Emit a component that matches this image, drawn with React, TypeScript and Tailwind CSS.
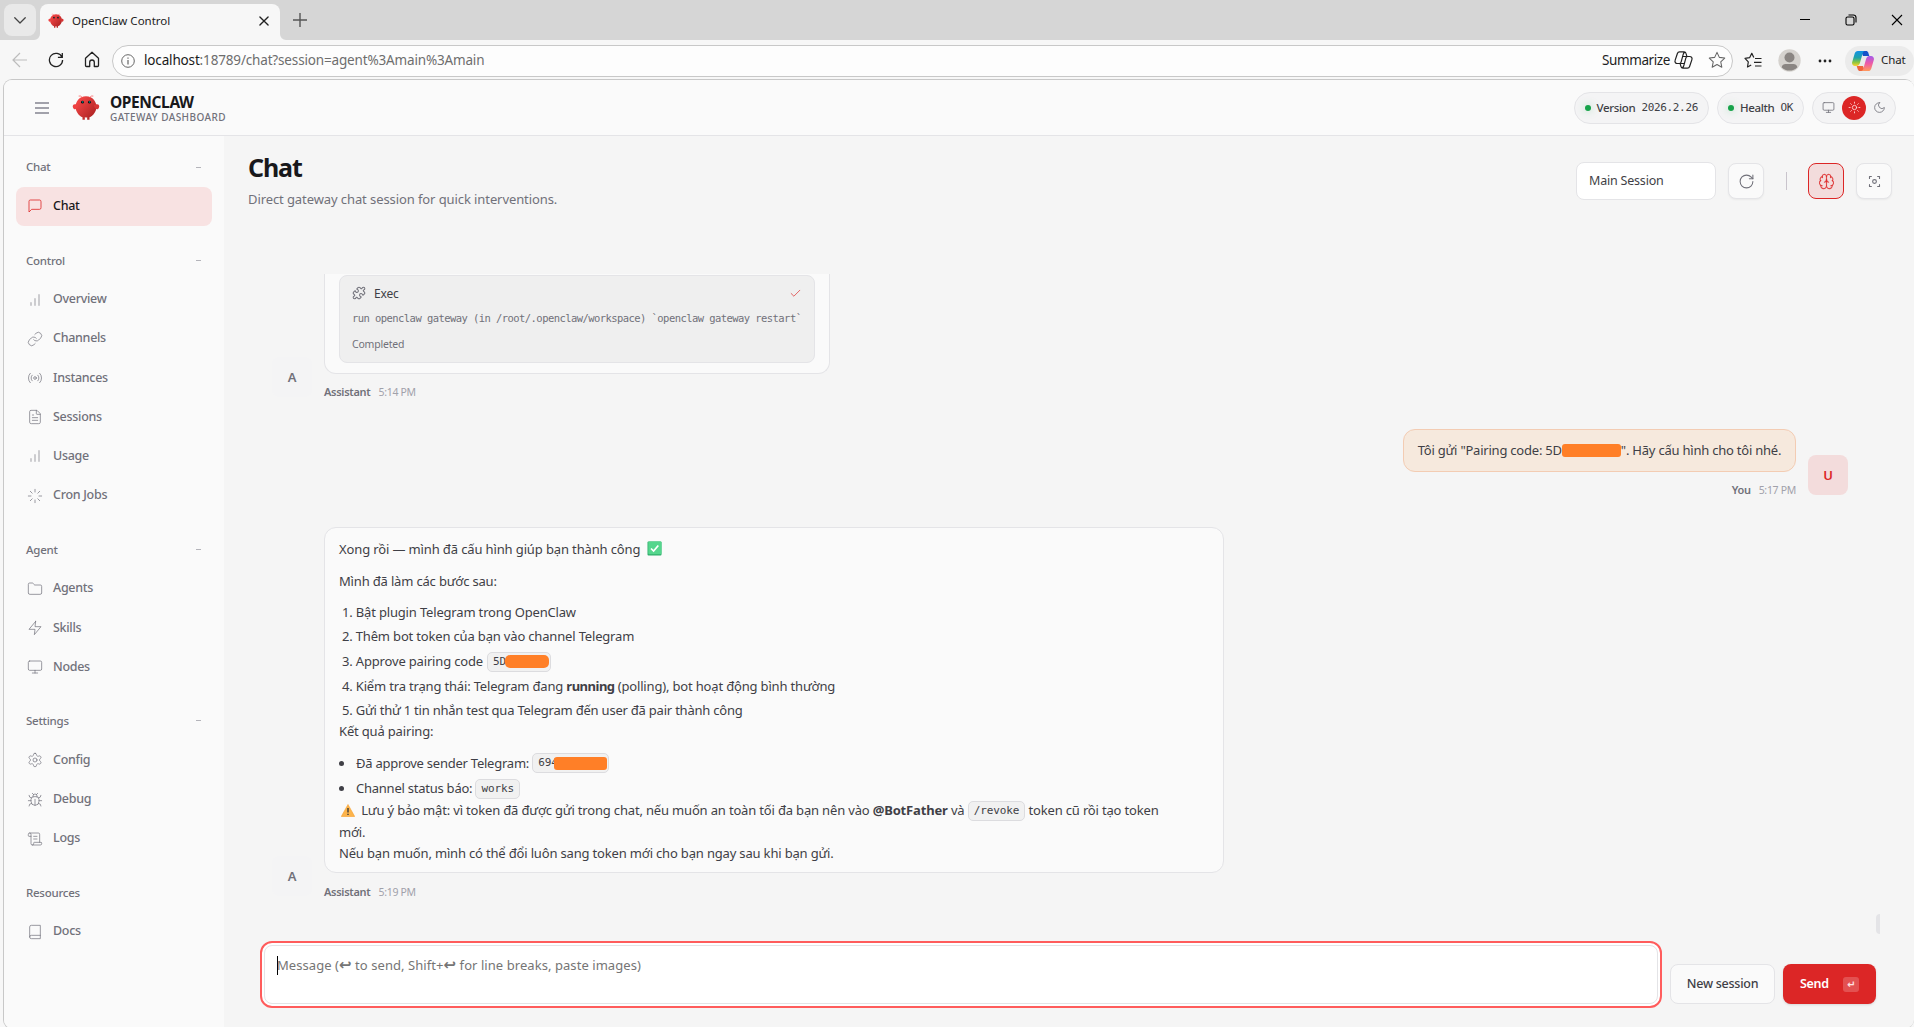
import React from 'react';
import {
  Brain,
  Bug,
  FileText,
  Folder,
  Link,
  Loader,
  Monitor,
  Puzzle,
  ScrollText,
} from 'lucide-react';

interface NavItem {
  label: string;
  icon: React.ReactNode;
  active?: boolean;
}

interface NavGroup {
  title: string;
  collapsible: boolean;
  items: NavItem[];
}

interface IconProps {
  size?: number;
  strokeWidth?: number;
  className?: string;
  children: React.ReactNode;
}

const Icon: React.FC<IconProps> = ({ size = 16, strokeWidth = 1.5, className, children }) => (
  <svg
    width={size}
    height={size}
    viewBox="0 0 24 24"
    fill="none"
    stroke="currentColor"
    strokeWidth={strokeWidth}
    strokeLinecap="round"
    strokeLinejoin="round"
    className={className}
  >
    {children}
  </svg>
);

const BarsIcon = () => (
  <Icon strokeWidth={2} className="opacity-70">
    <path d="M12 20V10M18 20V4M6 20v-4" />
  </Icon>
);

const ICON = { size: 16, strokeWidth: 1.5 };

const NAV: NavGroup[] = [
  {
    title: 'Chat',
    collapsible: true,
    items: [
      {
        label: 'Chat',
        active: true,
        icon: (
          <Icon>
            <path d="M21 15a2 2 0 0 1-2 2H7l-4 4V5a2 2 0 0 1 2-2h14a2 2 0 0 1 2 2z" />
          </Icon>
        ),
      },
    ],
  },
  {
    title: 'Control',
    collapsible: true,
    items: [
      { label: 'Overview', icon: <BarsIcon /> },
      { label: 'Channels', icon: <Link {...ICON} /> },
      {
        label: 'Instances',
        icon: (
          <Icon>
            <circle cx="12" cy="12" r="2" />
            <path d="M16.24 7.76a6 6 0 0 1 0 8.49m-8.48-.01a6 6 0 0 1 0-8.49m11.31-2.82a10 10 0 0 1 0 14.14m-14.14 0a10 10 0 0 1 0-14.14" />
          </Icon>
        ),
      },
      { label: 'Sessions', icon: <FileText {...ICON} /> },
      { label: 'Usage', icon: <BarsIcon /> },
      { label: 'Cron Jobs', icon: <Loader {...ICON} /> },
    ],
  },
  {
    title: 'Agent',
    collapsible: true,
    items: [
      { label: 'Agents', icon: <Folder {...ICON} /> },
      {
        label: 'Skills',
        icon: (
          <Icon>
            <path d="M13 2 3 14h9l-1 8 10-12h-9l1-8z" />
          </Icon>
        ),
      },
      { label: 'Nodes', icon: <Monitor {...ICON} /> },
    ],
  },
  {
    title: 'Settings',
    collapsible: true,
    items: [
      {
        label: 'Config',
        icon: (
          <Icon>
            <path d="M12.22 2h-.44a2 2 0 0 0-2 2v.18a2 2 0 0 1-1 1.73l-.43.25a2 2 0 0 1-2 0l-.15-.08a2 2 0 0 0-2.73.73l-.22.38a2 2 0 0 0 .73 2.73l.15.1a2 2 0 0 1 1 1.72v.51a2 2 0 0 1-1 1.74l-.15.09a2 2 0 0 0-.73 2.73l.22.38a2 2 0 0 0 2.73.73l.15-.08a2 2 0 0 1 2 0l.43.25a2 2 0 0 1 1 1.73V20a2 2 0 0 0 2 2h.44a2 2 0 0 0 2-2v-.18a2 2 0 0 1 1-1.73l.43-.25a2 2 0 0 1 2 0l.15.08a2 2 0 0 0 2.73-.73l.22-.39a2 2 0 0 0-.73-2.73l-.15-.08a2 2 0 0 1-1-1.74v-.5a2 2 0 0 1 1-1.74l.15-.09a2 2 0 0 0 .73-2.73l-.22-.38a2 2 0 0 0-2.73-.73l-.15.08a2 2 0 0 1-2 0l-.43-.25a2 2 0 0 1-1-1.73V4a2 2 0 0 0-2-2z" />
            <circle cx="12" cy="12" r="3" />
          </Icon>
        ),
      },
      { label: 'Debug', icon: <Bug {...ICON} /> },
      { label: 'Logs', icon: <ScrollText {...ICON} /> },
    ],
  },
  {
    title: 'Resources',
    collapsible: false,
    items: [
      {
        label: 'Docs',
        icon: (
          <Icon>
            <path d="M4 19.5v-15A2.5 2.5 0 0 1 6.5 2H20v20H6.5a2.5 2.5 0 0 1 0-5H20" />
          </Icon>
        ),
      },
    ],
  },
];

const ClawLogo: React.FC<{ size: number }> = ({ size }) => (
  <svg width={size} height={size} viewBox="0 0 120 120" fill="none">
    <defs>
      <linearGradient id="claw" x1="0" y1="0" x2="1" y2="1">
        <stop offset="0" stopColor="#ff4d4d" />
        <stop offset="1" stopColor="#a31d1d" />
      </linearGradient>
    </defs>
    <path
      fill="url(#claw)"
      d="M60 10C30 10 15 35 15 55s15 40 30 45v10h10v-10s5 2 10 0v10h10v-10c15-5 30-25 30-45S90 10 60 10Z"
    />
    <path fill="#ee4242" d="M20 45C5 40 0 50 5 60s15 5 20-5c3-7 0-10-5-10Z" />
    <path fill="#d63636" d="M100 45c15-5 20 5 15 15s-15 5-20-5c-3-7 0-10 5-10Z" />
    <path stroke="#ff4d4d" strokeWidth="3" strokeLinecap="round" d="M45 15Q35 5 30 8M75 15Q85 5 90 8" />
    <circle cx="45" cy="35" r="6" fill="#050810" />
    <circle cx="75" cy="35" r="6" fill="#050810" />
    <circle cx="46" cy="34" r="2.5" fill="#00e5cc" />
    <circle cx="76" cy="34" r="2.5" fill="#00e5cc" />
  </svg>
);

const CopilotOutline = () => (
  <svg
    width="19"
    height="18"
    viewBox="0 0 19 18"
    fill="none"
    stroke="#222"
    strokeWidth="1.2"
    strokeLinejoin="round"
    strokeLinecap="round"
    className="mb-px"
  >
    <path d="M12.8 5.200 12 2.400A2 2 0 0 0 10.100.900H5.600A2.300 2.300 0 0 0 3.400 2.500L1.100 9.400A2.300 2.300 0 0 0 3.300 12.500H5.200a2 2 0 0 0 1.900-1.400L9.200 3.300A2.800 2.800 0 0 1 11 1.100" />
    <path d="M6.200 12.800 7 15.600a2 2 0 0 0 1.900 1.500h4.500a2.300 2.300 0 0 0 2.200-1.600L17.900 8.600a2.300 2.300 0 0 0-2.200-3.100H13.800a2 2 0 0 0-1.900 1.400L9.800 14.700A2.800 2.800 0 0 1 8 16.900" />
    <path d="M8.700 5.500h5M5.200 12.500h5" />
  </svg>
);

const CopilotColor = () => (
  <svg width="22" height="20" viewBox="0 0 22 20" fill="none">
    <defs>
      <linearGradient id="cpLeft" x1="0" y1="0" x2="0" y2="1">
        <stop offset="0" stopColor="#1191e6" />
        <stop offset="0.45" stopColor="#1fa3a8" />
        <stop offset="0.75" stopColor="#8cc63f" />
        <stop offset="1" stopColor="#ffd02e" />
      </linearGradient>
      <linearGradient id="cpRight" x1="0" y1="0" x2="0" y2="1">
        <stop offset="0" stopColor="#a35bea" />
        <stop offset="0.5" stopColor="#ee5aa5" />
        <stop offset="1" stopColor="#ff9a5c" />
      </linearGradient>
    </defs>
    <path fill="#1553c9" d="M9 0h5.200c1 0 1.700.6 2 1.500L17.300 5H11z" />
    <path fill="url(#cpLeft)" d="M5.800 0H13c-1.500.2-2 1.200-2.400 2.600L8 11.800C7.500 13.600 6.500 15 4.600 15H3A3 3 0 0 1 .2 11.100L2.700 2.600C3.200 1 4.200 0 5.800 0z" />
    <path fill="#f0643c" d="M13 20H7.800c-1 0-1.700-.6-2-1.500L4.700 15H11z" />
    <path fill="url(#cpRight)" d="M16.200 20H9c1.500-.2 2-1.200 2.400-2.600L14 8.200C14.500 6.400 15.500 5 17.400 5H19a3 3 0 0 1 2.800 3.900l-2.500 8.500c-.5 1.600-1.500 2.600-3.100 2.600z" />
  </svg>
);

const TabStrip = () => (
  <div className="flex h-10 shrink-0 items-start bg-[#d6d6d6]">
    <div className="ml-1 mt-1 flex h-8 w-8 items-center justify-center rounded-lg bg-[#e9e9e9] text-[#444]">
      <Icon size={18} strokeWidth={1.7}>
        <path d="m5 9 7 7 7-7" />
      </Icon>
    </div>
    <div className="relative ml-1 mt-1 flex h-9 w-60 items-center rounded-t-lg bg-[#f7f7f7] pb-[3px] pl-2 pr-[9px]">
      <svg width="6" height="6" viewBox="0 0 6 6" fill="#f7f7f7" className="absolute -left-[6px] bottom-0">
        <path d="M6 0v6H0a6 6 0 0 0 6-6z" />
      </svg>
      <svg width="6" height="6" viewBox="0 0 6 6" fill="#f7f7f7" className="absolute -right-[6px] bottom-0">
        <path d="M0 0v6h6a6 6 0 0 1-6-6z" />
      </svg>
      <ClawLogo size={16} />
      <span className="ml-2 flex-1 text-[11.5px] text-[#222]">OpenClaw Control</span>
      <Icon size={14} strokeWidth={2.3} className="text-[#222]">
        <path d="M5 5l14 14M19 5 5 19" />
      </Icon>
    </div>
    <svg width="16" height="16" viewBox="0 0 16 16" stroke="#555" strokeWidth="1.4" className="ml-3 mt-3">
      <path d="M8 1v14M1 8h14" />
    </svg>
    <div className="ml-auto mt-[14px] flex items-center gap-[34px] pr-[11px] text-black">
      <svg width="12" height="12" viewBox="0 0 12 12" stroke="currentColor" strokeWidth="1">
        <path d="M1 5.5h10" />
      </svg>
      <svg width="12" height="12" viewBox="0 0 12 12" fill="none" stroke="currentColor" strokeWidth="1.1">
        <rect x="1" y="3" width="8" height="8" rx="1.5" />
        <path d="M3.5 1h5A2.5 2.5 0 0 1 11 3.5v5" />
      </svg>
      <svg width="12" height="12" viewBox="0 0 12 12" stroke="currentColor" strokeWidth="1.1">
        <path d="m1 1 10 10M11 1 1 11" />
      </svg>
    </div>
  </div>
);

const AddressBar = () => (
  <div className="flex h-[39px] shrink-0 items-center bg-[#f7f7f7] pt-[2px]">
    <svg width="16" height="16" viewBox="0 0 16 16" fill="none" stroke="#bdbdbd" strokeWidth="1.2" className="mb-px ml-3">
      <path d="M15 8H1M8 1 1 8l7 7" />
    </svg>
    <svg width="16" height="16" viewBox="0 0 16 16" fill="none" stroke="#222" strokeWidth="1.3" className="mb-px ml-5">
      <path d="M14 5.2A6.6 6.6 0 1 0 14.6 8M14.3 1v4.4H9.9" />
    </svg>
    <svg width="16" height="17" viewBox="0 0 16 17" fill="none" stroke="#222" strokeWidth="1.3" strokeLinejoin="round" className="mb-[2px] ml-5">
      <path d="M1.5 7.3 8 1.2l6.5 6.1V14.5a1 1 0 0 1-1 1H10.3v-4.2a2.3 2.3 0 0 0-4.6 0v4.2H2.5a1 1 0 0 1-1-1z" />
    </svg>
    <div className="ml-3 flex h-8 w-[1621px] items-center rounded-full border border-[#c8c8c8] bg-[#fdfdfd] pl-2 pr-[6px]">
      <svg width="14" height="14" viewBox="0 0 14 14" fill="none" stroke="#666" strokeWidth="1">
        <circle cx="7" cy="7" r="6.3" />
        <path d="M7 6v4.5M7 3.5v1.2" strokeWidth="1.2" />
      </svg>
      <span className="ml-[9px] flex-1 text-[13.5px] tracking-[-0.16px] text-[#6e6e6e]">
        <span className="text-[#1a1a1a]">localhost</span>:18789/chat?session=agent%3Amain%3Amain
      </span>
      <span className="mr-[4px] text-[13.5px] tracking-[-0.4px] text-[#1f1f1f]">Summarize</span>
      <CopilotOutline />
      <Icon size={18} strokeWidth={1.4} className="mb-px ml-[15px] text-[#666]">
        <path d="m12 1.8 3.1 6.7 7.2.9-5.3 5 1.4 7.2L12 18l-6.400 3.600L7 14.400l-5.300-5 7.200-.9z" />
      </Icon>
    </div>
    <svg width="18" height="17" viewBox="0 0 18 17" fill="none" stroke="#222" strokeWidth="1.2" strokeLinejoin="round" className="ml-[11px]">
      <path d="M9.8 5.5 7.8 1.3 5.6 5.7 1 6.4l3.3 3.4-.8 5.2 3.7-2M11 6.5h6.5M10 10.3h7.5M11 14h6.5" />
    </svg>
    <svg width="23" height="23" viewBox="0 0 23 23" className="ml-4">
      <circle cx="11.5" cy="11.5" r="11.2" fill="#d5d2ce" />
      <circle cx="11.5" cy="8.5" r="5" fill="#8a8582" />
      <path fill="#8a8582" d="M3.6 18.2c.6-2.2 2-3.2 4-3.2h7.8c2 0 3.4 1 4 3.2a11 11 0 0 1-15.8 0z" />
    </svg>
    <svg width="14" height="4" viewBox="0 0 14 4" fill="#222" className="ml-[17px]">
      <circle cx="2" cy="2" r="1.4" />
      <circle cx="7" cy="2" r="1.4" />
      <circle cx="12" cy="2" r="1.4" />
    </svg>
    <div className="ml-[13px] flex h-[30px] w-[69px] items-center rounded-full bg-[#ebebeb] pl-[7px]">
      <CopilotColor />
      <span className="mb-px ml-[7px] text-[11.5px] tracking-[-0.1px] text-[#222]">Chat</span>
    </div>
  </div>
);

const StatusPill: React.FC<{ label: string; value: string }> = ({ label, value }) => (
  <div className="flex h-8 items-center rounded-full border border-[#e4e4e7] bg-[#f4f4f5] px-[10px]">
    <span className="h-[6px] w-[6px] rounded-full bg-[#16a34a] shadow-[0_0_8px_rgba(22,163,74,0.35)]" />
    <span className="ml-[6px] text-[11.5px] font-medium tracking-[-0.34px] text-[#3f3f46]">{label}</span>
    <span className="ml-[6px] mt-[2px] font-['DejaVu_Sans_Mono',monospace] text-[11px] tracking-[-0.34px] text-[#3f3f46]">{value}</span>
  </div>
);

const Header = () => (
  <header className="flex h-14 shrink-0 items-center border-b border-[#e4e4e7] bg-[#fafafa] pl-[31px] pr-[18px]">
    <div className="flex w-[14px] flex-col gap-[3px]">
      <span className="h-[2px] bg-[#a1a1aa]" />
      <span className="h-[2px] bg-[#a1a1aa]" />
      <span className="h-[2px] bg-[#a1a1aa]" />
    </div>
    <div className="ml-[23px]">
      <ClawLogo size={28} />
    </div>
    <div className="ml-[10px] mt-[2px] flex flex-col">
      <span className="text-[15.5px] font-bold leading-4 tracking-[-0.4px] text-[#18181b]">OPENCLAW</span>
      <span className="mt-px text-[10px] font-medium leading-3 tracking-[0.43px] text-[#71717a]">GATEWAY DASHBOARD</span>
    </div>
    <div className="ml-auto flex items-center gap-2">
      <StatusPill label="Version" value="2026.2.26" />
      <StatusPill label="Health" value="OK" />
      <div className="flex h-8 w-[84px] items-center justify-between rounded-full border border-[#e4e4e7] bg-[#f4f4f5] px-[9px] text-[#71717a]">
        <Monitor size={13} strokeWidth={1.5} />
        <span className="flex h-6 w-6 items-center justify-center rounded-full bg-[#dc2626] text-red-100">
          <Icon size={13}>
            <circle cx="12" cy="12" r="4" />
            <path d="M12 2v2M12 20v2M4.93 4.93l1.41 1.41M17.66 17.66l1.41 1.41M2 12h2M20 12h2M6.34 17.66l-1.41 1.41M19.07 4.93l-1.41 1.41" />
          </Icon>
        </span>
        <Icon size={13}>
          <path d="M12 3a6 6 0 0 0 9 9 9 9 0 1 1-9-9Z" />
        </Icon>
      </div>
    </div>
  </header>
);

const Sidebar = () => (
  <aside className="flex w-[220px] shrink-0 flex-col gap-[20.6px] bg-[#fafafa] px-3 pt-[17px]">
    {NAV.map((group) => (
      <div key={group.title}>
        <div className="mb-[6.400px] flex h-7 items-center justify-between px-[10px] text-[11.5px] font-medium tracking-[-0.25px] text-[#71717a]">
          <span>{group.title}</span>
          {group.collapsible && <span className="mr-px h-px w-[5px] bg-[#b4b4ba]" />}
        </div>
        <nav className="flex flex-col gap-px">
          {group.items.map((item) => (
            <a
              key={item.label}
              className={`flex h-[38.2px] items-center gap-[10px] rounded-lg px-[11px] text-[12.5px] font-medium tracking-[-0.29px] ${
                item.active ? 'bg-[#f8e2e2] text-[#18181b]' : 'text-[#71717a]'
              }`}
            >
              <span className={item.active ? 'text-[#dc2626]/80' : 'text-[#71717a]/70'}>{item.icon}</span>
              {item.label}
            </a>
          ))}
        </nav>
      </div>
    ))}
  </aside>
);

const PageHead = () => (
  <div className="flex h-[74px] shrink-0 justify-between pl-6 pr-[22px]">
    <div className="pt-[15px]">
      <h1 className="text-[25px] font-bold leading-8 tracking-[-1.1px] text-[#18181b]">Chat</h1>
      <p className="mt-[6px] text-[13px] leading-5 tracking-[-0.09px] text-[#71717a]">Direct gateway chat session for quick interventions.</p>
    </div>
    <div className="flex items-center pt-4 text-[#71717a]">
      <div className="flex h-[38px] w-[140px] items-center rounded-lg border border-[#e4e4e7] bg-white px-3 text-[12.5px] tracking-[-0.2px] text-[#3f3f46]">
        Main Session
      </div>
      <button className="ml-3 flex h-9 w-9 items-center justify-center rounded-lg border border-[#e4e4e7] bg-[#fafafa] shadow-xs">
        <Icon size={17}>
          <path d="M21 12a9 9 0 1 1-9-9c2.52 0 4.93 1 6.74 2.74L21 8" />
          <path d="M21 3v5h-5" />
        </Icon>
      </button>
      <span className="ml-[22px] mr-[21px] h-[18px] w-px bg-[#c9c4cc]" />
      <button className="flex h-9 w-9 items-center justify-center rounded-lg border border-[#dc2626] bg-[#f3dcdc] text-[#dc2626]/80">
        <Brain size={17} strokeWidth={1.6} />
      </button>
      <button className="ml-3 flex h-9 w-9 items-center justify-center rounded-lg border border-[#e4e4e7] bg-[#fafafa] shadow-xs">
        <Icon size={15} strokeWidth={1.8}>
          <path d="M4 7V4h3M20 7V4h-3M4 17v3h3M20 17v3h-3" />
          <circle cx="12" cy="12" r="3" />
        </Icon>
      </button>
    </div>
  </div>
);

const Code: React.FC<{ className?: string; children: React.ReactNode }> = ({ className = '', children }) => (
  <code
    className={`inline-block h-5 whitespace-nowrap rounded-[5px] border border-[#dcdcdf] bg-[#f1f1f1] px-[5px] align-middle font-['DejaVu_Sans_Mono',monospace] text-[11px] leading-[18px] tracking-[-0.1px] ${className}`}
  >
    {children}
  </code>
);

const Check = () => (
  <svg width="15" height="15" viewBox="0 0 15 15" className="ml-[3px] inline-block align-[-2px]">
    <rect x="0.5" y="0.5" width="14" height="14" rx="1" fill="#2fae6b" />
    <rect x="1.3" y="0.5" width="13.2" height="12.8" rx="1" fill="#55d68d" />
    <path d="m4 7.5 2.6 2.6L11.3 4.5" fill="none" stroke="#fff" strokeWidth="1.7" />
  </svg>
);

const Warning = () => (
  <svg width="14" height="13" viewBox="0 0 14 13" className="ml-[2px] mr-[3px] inline-block align-[-2px]">
    <path d="M7 .5 13.7 12.5H.3z" fill="#fdb44b" stroke="#f5a02f" strokeWidth=".6" strokeLinejoin="round" />
    <path d="M7 4v4.5M7 9.8v1.3" stroke="#3b3b3b" strokeWidth="1.4" />
  </svg>
);

const Sender: React.FC<{ name: string; time: string }> = ({ name, time }) => (
  <div className="mt-2 flex gap-2 text-[11px] leading-5 tracking-[-0.3px]">
    <span className="font-semibold text-[#71717a]">{name}</span>
    <span className="text-[10.5px] text-[#a1a1aa]">{time}</span>
  </div>
);

const AssistantAvatar = () => (
  <div className="flex h-10 w-10 items-center justify-center rounded-lg bg-[#f4f4f5] text-[13px] font-semibold text-[#71717a]">A</div>
);

const Thread = () => (
  <div className="mt-[64px] flex h-[660px] shrink-0 flex-col overflow-hidden pl-12 text-[13px] leading-[21px] tracking-[-0.17px] text-[#3f3f46]">
    <div className="flex gap-3">
      <div className="pt-[83px]">
        <AssistantAvatar />
      </div>
      <div>
        <div className="h-[100px] w-[506px] rounded-b-xl border border-t-0 border-[#e4e4e7] bg-[#fafafa] px-[14px] pt-px">
          <div className="h-[88px] rounded-lg border border-[#e4e4e7] bg-[#efefef] px-3 pt-[7px]">
            <div className="flex h-5 items-center text-[12px] tracking-[-0.2px] text-[#3f3f46]">
              <Puzzle size={14} strokeWidth={1.8} className="mr-[8px] text-[#71717a]" />
              Exec
              <Icon size={13} strokeWidth={1.6} className="ml-auto text-[#dc2626]/80">
                <path d="M20 6 9 17l-5-5" />
              </Icon>
            </div>
            <div className="mt-[5px] whitespace-nowrap font-['DejaVu_Sans_Mono',monospace] text-[10.5px] leading-5 tracking-[-0.56px] text-[#71717a]">
              run openclaw gateway (in /root/.openclaw/workspace) `openclaw gateway restart`
            </div>
            <div className="mt-[6px] text-[10.5px] leading-5 tracking-[-0.2px] text-[#71717a]">Completed</div>
          </div>
        </div>
        <Sender name="Assistant" time="5:14 PM" />
      </div>
    </div>

    <div className="mt-[27px] flex justify-end gap-3 pr-[66px]">
      <div className="flex flex-col items-end">
        <div className="flex h-[43px] w-[393px] items-center justify-center whitespace-nowrap rounded-xl border border-[#f3ccb3] bg-[#f6e9dd] tracking-[-0.22px]">
          Tôi gửi "Pairing code: 5D
          <span className="h-[13px] w-[59px] rounded-[3px] bg-[#ff7f27]" />
          ". Hãy cấu hình cho tôi nhé.
        </div>
        <Sender name="You" time="5:17 PM" />
      </div>
      <div className="mt-[26px] flex h-10 w-10 items-center justify-center rounded-lg bg-[#f3dcdc] text-[13px] font-semibold text-[#dc2626]">U</div>
    </div>

    <div className="mt-[27px] flex gap-3">
      <div className="flex flex-col justify-end pb-[6px]">
        <AssistantAvatar />
      </div>
      <div>
        <div className="mb-[9px] h-[346px] w-[900px] rounded-xl border border-[#e4e4e7] bg-[#fafafa] px-[14px] pt-[11px]">
          <p className="mb-[10.5px] tracking-[-0.13px]">
            Xong rồi — mình đã cấu hình giúp bạn thành công <Check />
          </p>
          <p className="mb-[10.5px]">Mình đã làm các bước sau:</p>
          <ol className="flex flex-col pl-[3px]">
            <li className="h-6">1. Bật plugin Telegram trong OpenClaw</li>
            <li className="h-[25px]">2. Thêm bot token của bạn vào channel Telegram</li>
            <li className="flex h-[25px] items-center gap-[4px] pb-1">
              3. Approve pairing code
              <Code className="w-16">
                5D
                <span className="-ml-px inline-block h-[13px] w-[44px] rounded-[5px] bg-[#ff7f27] align-middle" />
              </Code>
            </li>
            <li className="h-6">
              4. Kiểm tra trạng thái: Telegram đang <strong className="font-bold tracking-[-0.5px]">running</strong> (polling), bot hoạt động bình thường
            </li>
            <li className="h-[21px] tracking-[-0.22px]">5. Gửi thử 1 tin nhắn test qua Telegram đến user đã pair thành công</li>
          </ol>
          <p className="mb-[10.5px]">Kết quả pairing:</p>
          <ul>
            <li className="flex h-[25px] items-center pb-1 tracking-[-0.24px]">
              <span className="mr-3 h-[5px] w-[5px] rounded-full bg-[#3f3f46]" />
              Đã approve sender Telegram:&nbsp;
              <Code className="w-[77px]">
                694
                <span className="-ml-[4px] inline-block h-[13px] w-[53px] rounded-[3px] bg-[#ff7f27] align-middle" />
              </Code>
            </li>
            <li className="flex h-[22px] items-center tracking-[-0.24px]">
              <span className="mr-3 h-[5px] w-[5px] rounded-full bg-[#3f3f46]" />
              Channel status báo:&nbsp;
              <Code>works</Code>
            </li>
          </ul>
          <p className="flex h-[22px] items-center whitespace-pre">
            <Warning /> Lưu ý bảo mật: vì token đã được gửi trong chat, nếu muốn an toàn tối đa bạn nên vào <strong className="font-bold">@BotFather</strong> và <Code>/revoke</Code> token cũ rồi tạo token
          </p>
          <p>mới.</p>
          <p>Nếu bạn muốn, mình có thể đổi luôn sang token mới cho bạn ngay sau khi bạn gửi.</p>
        </div>
        <Sender name="Assistant" time="5:19 PM" />
      </div>
    </div>
    <div className="mr-[34px] mt-auto h-5 w-1 self-end rounded-l-full bg-[#e4e4e7]" />
  </div>
);

const Composer = () => (
  <div className="mt-[7px] flex items-end gap-2 pl-9 pr-[38px]">
    <div className="h-[67px] w-[1402px] rounded-xl border-2 border-[#ff5c5c] bg-white p-[2px]">
      <div className="flex h-full rounded-lg border border-[#e4e4e7] bg-white pl-3 pt-[10px] text-[13px] leading-5 text-[#757575]">
        <span className="h-[19px] w-px bg-black" />
        <span className="-mt-[2px] -ml-px tracking-[0.06px]">
          Message (<span className="text-[15px] font-bold">↩</span> to send, Shift+<span className="text-[15px] font-bold">↩</span> for line breaks, paste images)
        </span>
      </div>
    </div>
    <button className="mb-[4px] h-10 w-[105px] rounded-lg border border-[#e4e4e7] bg-[#fafafa] text-[12.5px] font-medium tracking-[-0.25px] text-[#3f3f46]">
      New session
    </button>
    <button className="mb-[4px] flex h-10 w-[93px] items-center justify-between rounded-lg bg-[#dc2626] pl-[17px] pr-[17px] text-[12.5px] font-semibold tracking-[-0.3px] text-white shadow-sm">
      Send
      <kbd className="flex h-[15px] w-4 items-center justify-center rounded-[3px] bg-white/20 font-['DejaVu_Sans',sans-serif] text-[10px] text-red-100">↵</kbd>
    </button>
  </div>
);

const App: React.FC = () => (
  <div className="flex h-[1027px] w-[1914px] flex-col overflow-hidden bg-[#f7f7f7] font-['Noto_Sans','DejaVu_Sans',sans-serif]">
    <TabStrip />
    <AddressBar />
    <div className="ml-[3px] flex h-[950px] shrink-0 flex-col overflow-hidden rounded-[9px] border border-r-0 border-[#c8c8c8] bg-[#f5f5f5]">
      <Header />
      <div className="flex min-h-0 flex-1">
        <Sidebar />
        <main className="flex min-w-0 flex-1 flex-col">
          <PageHead />
          <Thread />
          <Composer />
        </main>
      </div>
    </div>
  </div>
);

export default App;
